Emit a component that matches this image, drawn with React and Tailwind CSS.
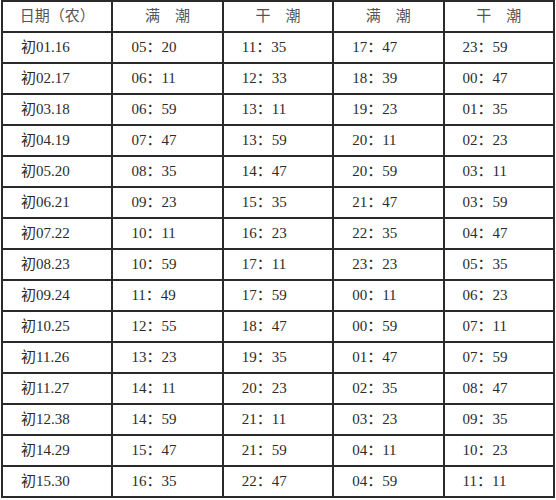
const rows = [
  ["初01.16", "05：20", "11：35", "17：47", "23：59"],
  ["初02.17", "06：11", "12：33", "18：39", "00：47"],
  ["初03.18", "06：59", "13：11", "19：23", "01：35"],
  ["初04.19", "07：47", "13：59", "20：11", "02：23"],
  ["初05.20", "08：35", "14：47", "20：59", "03：11"],
  ["初06.21", "09：23", "15：35", "21：47", "03：59"],
  ["初07.22", "10：11", "16：23", "22：35", "04：47"],
  ["初08.23", "10：59", "17：11", "23：23", "05：35"],
  ["初09.24", "11：49", "17：59", "00：11", "06：23"],
  ["初10.25", "12：55", "18：47", "00：59", "07：11"],
  ["初11.26", "13：23", "19：35", "01：47", "07：59"],
  ["初11.27", "14：11", "20：23", "02：35", "08：47"],
  ["初12.38", "14：59", "21：11", "03：23", "09：35"],
  ["初14.29", "15：47", "21：59", "04：11", "10：23"],
  ["初15.30", "16：35", "22：47", "04：59", "11：11"],
];

const headers = ["日期（农）", "满　潮", "干　潮", "满　潮", "干　潮"];

export default function App() {
  return (
    <div className="min-h-[500px] w-[556px] bg-white">
      <table
        className="ml-px w-[554px] table-fixed border-collapse text-[15px] text-[#2b2b2b]"
        style={{ fontFamily: '"Liberation Serif", "Noto Sans CJK SC", serif' }}
      >
        <thead>
          <tr className="h-[31px]">
            {headers.map((h, i) => (
              <th
                key={i}
                className="border-2 border-[#2a2a2a] p-0 text-center font-normal text-[#555]"
              >
                {h}
              </th>
            ))}
          </tr>
        </thead>
        <tbody>
          {rows.map((r) => (
            <tr key={r[0]} className="h-[31px]">
              {r.map((c, i) => (
                <td
                  key={i}
                  className="border-2 border-[#2a2a2a] py-0 pl-[18px] pr-0 text-left"
                >
                  {c}
                </td>
              ))}
            </tr>
          ))}
        </tbody>
      </table>
    </div>
  );
}
